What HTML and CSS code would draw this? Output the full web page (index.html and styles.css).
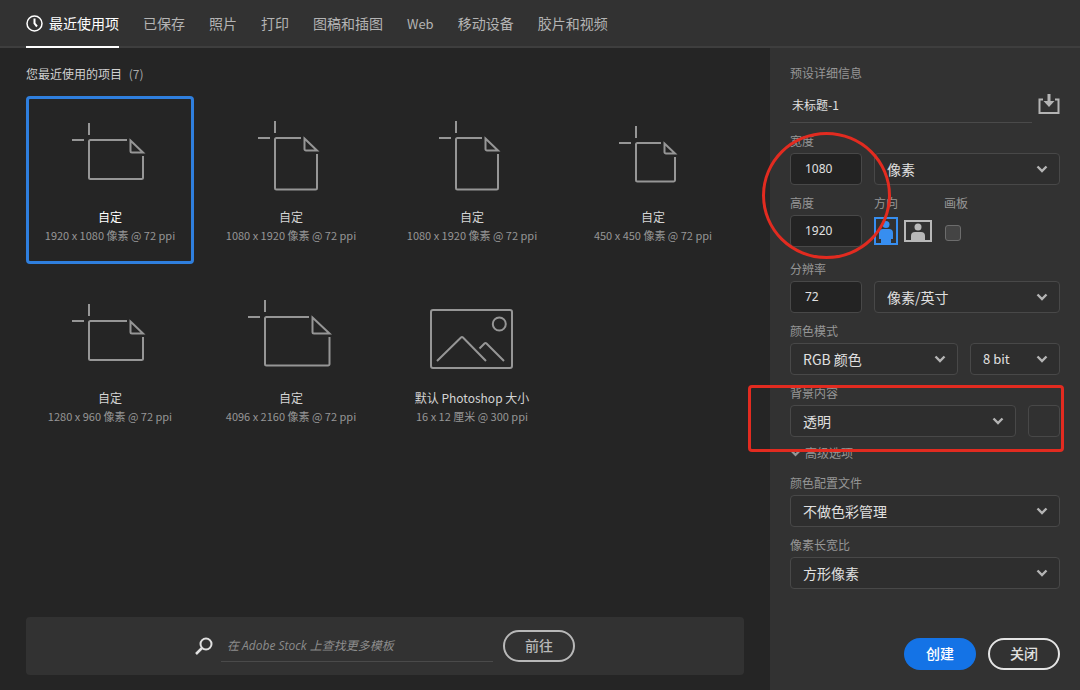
FILE: index.html
```html
<!DOCTYPE html>
<html lang="zh-CN">
<head>
<meta charset="utf-8">
<meta name="viewport" content="width=device-width, initial-scale=1">
<title>新建文档</title>
<link rel="stylesheet" href="styles.css">
</head>
<body>
<svg class="defs" aria-hidden="true">
  <symbol id="chevron" viewBox="0 0 12 8"><path d="M1.500 1.500 6 6l4.500-4.500" fill="none" stroke="currentColor" stroke-width="2.400"/></symbol>
  <symbol id="doc-wide" viewBox="0 0 162 107"><path d="M60 24v12M43 41h12M98 41H61.500a1.500 1.500 0 0 0-1.500 1.500V78.500a1.500 1.500 0 0 0 1.500 1.500H112.500a1.500 1.500 0 0 0 1.500-1.500V57M101.500 41.500l12.500 12H103a1.500 1.500 0 0 1-1.500-1.500z"/></symbol>
  <symbol id="doc-tall" viewBox="0 0 162 107"><path d="M65 22v12M48 39h12M91 39H66.500a1.500 1.500 0 0 0-1.500 1.500V89a1.500 1.500 0 0 0 1.500 1.500H105.500a1.500 1.500 0 0 0 1.500-1.500V55M94.500 39.500l12.500 12H96a1.500 1.500 0 0 1-1.500-1.500z"/></symbol>
  <symbol id="doc-square" viewBox="0 0 162 107"><path d="M64 27v12M47 44h12M89 44H65.500a1.500 1.500 0 0 0-1.500 1.500V81a1.500 1.500 0 0 0 1.500 1.500H101.500a1.500 1.500 0 0 0 1.500-1.500V58M92.500 44.500l10.500 10H94a1.500 1.500 0 0 1-1.500-1.500z"/></symbol>
  <symbol id="doc-large" viewBox="0 0 162 107"><path d="M55 20v12M38 37h12M99 37H56.500a1.500 1.500 0 0 0-1.500 1.500V84a1.500 1.500 0 0 0 1.500 1.500H118a1.500 1.500 0 0 0 1.500-1.500V57M102.500 37.500l17 16H104a1.500 1.500 0 0 1-1.500-1.500z"/></symbol>
  <symbol id="picture" viewBox="0 0 162 107"><rect x="40" y="30" width="81" height="58" rx="2"/><circle cx="108.300" cy="44" r="6.500"/><path d="M46 81 70 57.500q1-1 2 0L95 81M88.500 68.500l5-5q1-1 2 0L113 81"/></symbol>
</svg>
<div class="dialog">
  <nav class="tabs">
    <button class="tab active" type="button">
      <svg width="17" height="17" viewBox="0 0 17 17" fill="none" stroke="currentColor" aria-hidden="true"><circle cx="8.500" cy="8.500" r="7.500" stroke-width="1.500"/><path d="M8.500 3.500v5l2.500 3" stroke-width="2"/></svg>最近使用项</button>
    <button class="tab" type="button">已保存</button>
    <button class="tab" type="button">照片</button>
    <button class="tab" type="button">打印</button>
    <button class="tab" type="button">图稿和插图</button>
    <button class="tab latin" type="button">Web</button>
    <button class="tab" type="button">移动设备</button>
    <button class="tab" type="button">胶片和视频</button>
  </nav>
  <div class="body">
    <main class="recent">
      <h1 class="heading">您最近使用的项目 <span class="count">(7)</span></h1>
      <div class="cards">
        <button class="card selected" type="button"><svg class="art"><use href="#doc-wide"/></svg><span class="name">自定</span><span class="size">1920 x 1080 像素 @ 72 ppi</span></button>
        <button class="card" type="button"><svg class="art"><use href="#doc-tall"/></svg><span class="name">自定</span><span class="size">1080 x 1920 像素 @ 72 ppi</span></button>
        <button class="card" type="button"><svg class="art"><use href="#doc-tall"/></svg><span class="name">自定</span><span class="size">1080 x 1920 像素 @ 72 ppi</span></button>
        <button class="card" type="button"><svg class="art"><use href="#doc-square"/></svg><span class="name">自定</span><span class="size">450 x 450 像素 @ 72 ppi</span></button>
        <button class="card" type="button"><svg class="art"><use href="#doc-wide"/></svg><span class="name">自定</span><span class="size">1280 x 960 像素 @ 72 ppi</span></button>
        <button class="card" type="button"><svg class="art"><use href="#doc-large"/></svg><span class="name">自定</span><span class="size">4096 x 2160 像素 @ 72 ppi</span></button>
        <button class="card" type="button"><svg class="art"><use href="#picture"/></svg><span class="name">默认 Photoshop 大小</span><span class="size">16 x 12 厘米 @ 300 ppi</span></button>
      </div>
      <form class="stock">
        <svg class="search-icon" width="18" height="18" viewBox="0 0 18 18" fill="none" stroke="currentColor" aria-hidden="true"><circle cx="11" cy="7" r="5.500" stroke-width="2"/><path d="M7 11 1 17" stroke-width="2.500"/></svg>
        <input class="search" type="text" aria-label="搜索模板" placeholder="在 Adobe Stock 上查找更多模板">
        <button class="pill go" type="button">前往</button>
      </form>
    </main>
    <form class="details">
      <h2 class="label">预设详细信息</h2>
      <div class="title-row">
        <input class="doc-name" type="text" aria-label="名称" value="未标题-1">
        <button class="save" type="button" aria-label="保存预设"><svg width="22" height="21" viewBox="0 0 22 21" fill="none" stroke="currentColor"><path d="M5 5.500H1.500v13.500h19V5.500H17" stroke-width="2"/><path d="M11 0v8" stroke-width="3"/><path d="M5.500 7h11L11 13z" fill="currentColor" stroke="none"/></svg></button>
      </div>
      <div class="group">
        <label class="label" for="w">宽度</label>
        <div class="row num-row">
          <input class="box num" id="w" type="text" value="1080">
          <span class="pick"><select class="box" aria-label="单位"><option>像素</option></select><svg class="chev"><use href="#chevron"/></svg></span>
        </div>
      </div>
      <div class="row orient-row">
        <div class="group">
          <label class="label" for="h">高度</label>
          <input class="box num" id="h" type="text" value="1920">
        </div>
        <div class="group">
          <span class="label" id="orient">方向</span>
          <div class="orients" role="group" aria-labelledby="orient">
            <button class="orient on" type="button" aria-label="纵向"><svg width="24" height="28" viewBox="0 0 24 28"><rect x="1" y="1" width="22" height="26" fill="none" stroke="currentColor" stroke-width="2"/><circle cx="12" cy="7.500" r="3.500" fill="currentColor"/><path d="M5 22v-6q0-4 4-4h6q4 0 4 4v6h-2v4H7v-4z" fill="currentColor"/></svg></button>
            <button class="orient" type="button" aria-label="横向"><svg width="28" height="22" viewBox="0 0 28 22"><rect x="1" y="1" width="26" height="20" fill="none" stroke="currentColor" stroke-width="2"/><circle cx="14" cy="7" r="3.500" fill="currentColor"/><path d="M7 21v-5q0-4 4-4h6q4 0 4 4v5z" fill="currentColor"/></svg></button>
          </div>
        </div>
        <div class="group">
          <label class="label" for="artboard">画板</label>
          <div class="check-wrap"><input class="check" id="artboard" type="checkbox"></div>
        </div>
      </div>
      <div class="group resolution">
        <label class="label" for="res">分辨率</label>
        <div class="row num-row">
          <input class="box num" id="res" type="text" value="72">
          <span class="pick"><select class="box" aria-label="分辨率单位"><option>像素/英寸</option></select><svg class="chev"><use href="#chevron"/></svg></span>
        </div>
      </div>
      <div class="group">
        <label class="label" for="mode">颜色模式</label>
        <div class="row mode-row">
          <span class="pick"><select class="box" id="mode"><option>RGB 颜色</option></select><svg class="chev"><use href="#chevron"/></svg></span>
          <span class="pick"><select class="box depth" aria-label="位深度"><option>8 bit</option></select><svg class="chev"><use href="#chevron"/></svg></span>
        </div>
      </div>
      <div class="group">
        <label class="label" for="bg">背景内容</label>
        <div class="row bg-row">
          <span class="pick"><select class="box" id="bg"><option>透明</option></select><svg class="chev"><use href="#chevron"/></svg></span>
          <button class="box swatch" type="button" aria-label="背景颜色"></button>
        </div>
      </div>
      <button class="label advanced" type="button"><svg class="mini"><use href="#chevron"/></svg>高级选项</button>
      <div class="group">
        <label class="label" for="profile">颜色配置文件</label>
        <span class="pick"><select class="box" id="profile"><option>不做色彩管理</option></select><svg class="chev"><use href="#chevron"/></svg></span>
      </div>
      <div class="group">
        <label class="label" for="ratio">像素长宽比</label>
        <span class="pick"><select class="box" id="ratio"><option>方形像素</option></select><svg class="chev"><use href="#chevron"/></svg></span>
      </div>
      <div class="actions">
        <button class="pill create" type="button">创建</button>
        <button class="pill close" type="button">关闭</button>
      </div>
      <div class="mark mark-circle"></div>
      <div class="mark mark-box"></div>
    </form>
  </div>
</div>
</body>
</html>
```
FILE: styles.css
```css
* { box-sizing: border-box; }

body {
  margin: 0;
  background: #252525;
  color: #e0e0e0;
  font-family: "Noto Sans CJK SC", sans-serif;
  font-size: 14px;
}

button, input, select { font: inherit; color: inherit; margin: 0; }
button { background: none; border: 0; padding: 0; }
svg { display: block; }
.defs { position: absolute; width: 0; height: 0; }

.dialog { display: flex; flex-direction: column; min-height: 100vh; }

.tabs {
  display: flex;
  gap: 24px;
  padding: 0 26px;
  height: 48px;
  background: #323232;
  box-shadow: inset 0 -2px #3e3e3e;
}
.tab {
  display: flex;
  align-items: center;
  gap: 6px;
  color: #b4b4b4;
  white-space: nowrap;
  border-bottom: 2px solid transparent;
}
.tab.active { color: #fff; border-color: #fff; }
.latin { font-size: 13px; }

.body { display: flex; flex: 1; }

.recent {
  flex: 1;
  display: flex;
  flex-direction: column;
  padding: 16px 26px 15px;
}
.heading { margin: 0 0 12px; font-size: 12px; line-height: 20px; font-weight: 400; color: #d0d0d0; }
.count { margin-left: 4px; color: #a8a8a8; }

.cards { display: grid; grid-template-columns: repeat(auto-fill, 168px); gap: 13px; }
.card {
  display: flex;
  flex-direction: column;
  align-items: center;
  height: 168px;
  border: 3px solid transparent;
  border-radius: 4px;
}
.card.selected { border-color: #2f7fde; }
.art { width: 162px; height: 107px; fill: none; stroke: #969696; stroke-width: 2; }
.name { font-size: 12px; line-height: 22px; color: #d4d4d4; }
.selected .name { color: #fff; }
.size { font-size: 11px; line-height: 14px; color: #969696; white-space: nowrap; }

.stock {
  display: flex;
  justify-content: center;
  align-items: center;
  margin-top: auto;
  height: 58px;
  border-radius: 4px;
  background: #323232;
}
.search {
  width: 272px;
  height: 32px;
  margin: 0 10px 0 8px;
  padding: 0 6px;
  border: 0;
  border-bottom: 1px solid #4a4a4a;
  background: none;
  font-family: "Open Sans", "Noto Sans CJK SC", sans-serif;
  font-size: 12px;
  font-style: italic;
}
.search::placeholder { color: #8c8c8c; opacity: 1; }

.pill { width: 72px; height: 32px; padding-bottom: 2px; border-radius: 16px; font-weight: 500; }
.go { border: 2px solid #b8b8b8; color: #b8b8b8; }
.create { background: #1473e6; color: #fff; }
.close { border: 2px solid #e4e4e4; }

.details {
  position: relative;
  display: flex;
  flex-direction: column;
  gap: 10px;
  width: 310px;
  padding: 17px 20px 20px;
  background: #323232;
}
.label { margin: 0; font-size: 12px; line-height: 16px; font-weight: 400; color: #969696; }
.title-row { display: flex; align-items: flex-start; gap: 6px; }
.doc-name {
  flex: 1;
  min-width: 0;
  height: 32px;
  padding: 0 2px 4px;
  border: 0;
  border-bottom: 1px solid #4a4a4a;
  background: none;
  font-size: 12px;
}
.save { padding-top: 3px; color: #b4b4b4; }

.group { display: flex; flex-direction: column; gap: 4px; }
.row { display: grid; gap: 12px; }
.num-row { grid-template-columns: 72px 1fr; }
.orient-row { grid-template-columns: 72px 58px 1fr; }
.mode-row { grid-template-columns: 1fr 90px; }
.bg-row { grid-template-columns: 1fr 32px; }
.resolution { margin-top: 4px; }

.box {
  width: 100%;
  height: 32px;
  padding: 0 12px 1px;
  border: 1px solid #484848;
  border-radius: 4px;
  background: #2e2e2e;
  appearance: none;
}
.num { padding: 0 14px 1px; background: #232323; font-family: "Noto Sans", sans-serif; font-size: 12px; }
.depth { font-size: 13px; }
.swatch { background: #313131; }
.pick { position: relative; display: block; }
.chev {
  position: absolute;
  right: 12px;
  top: 12px;
  width: 12px;
  height: 8px;
  color: #b4b4b4;
  pointer-events: none;
}

.orients { display: flex; align-items: center; gap: 6px; height: 32px; }
.orient { color: #b8b8b8; }
.orient.on { color: #378ef0; }
.check-wrap { display: flex; align-items: center; height: 32px; padding: 4px 0 0 1px; }
.check {
  appearance: none;
  width: 16px;
  height: 16px;
  margin: 0;
  border: 1px solid #6c6c6c;
  border-radius: 3px;
  background: #444;
}

.advanced { display: flex; align-items: center; gap: 4px; margin: -2px 0 4px; }
.mini { width: 11px; height: 8px; }

.actions { display: flex; justify-content: flex-end; gap: 12px; margin-top: auto; }

.mark { position: absolute; border: 3px solid #e22b20; pointer-events: none; }
.mark-circle { left: -8px; top: 84px; width: 129px; height: 127px; border-radius: 50%; }
.mark-box { left: -22px; top: 337px; width: 316px; height: 67px; border-radius: 4px; }
```
